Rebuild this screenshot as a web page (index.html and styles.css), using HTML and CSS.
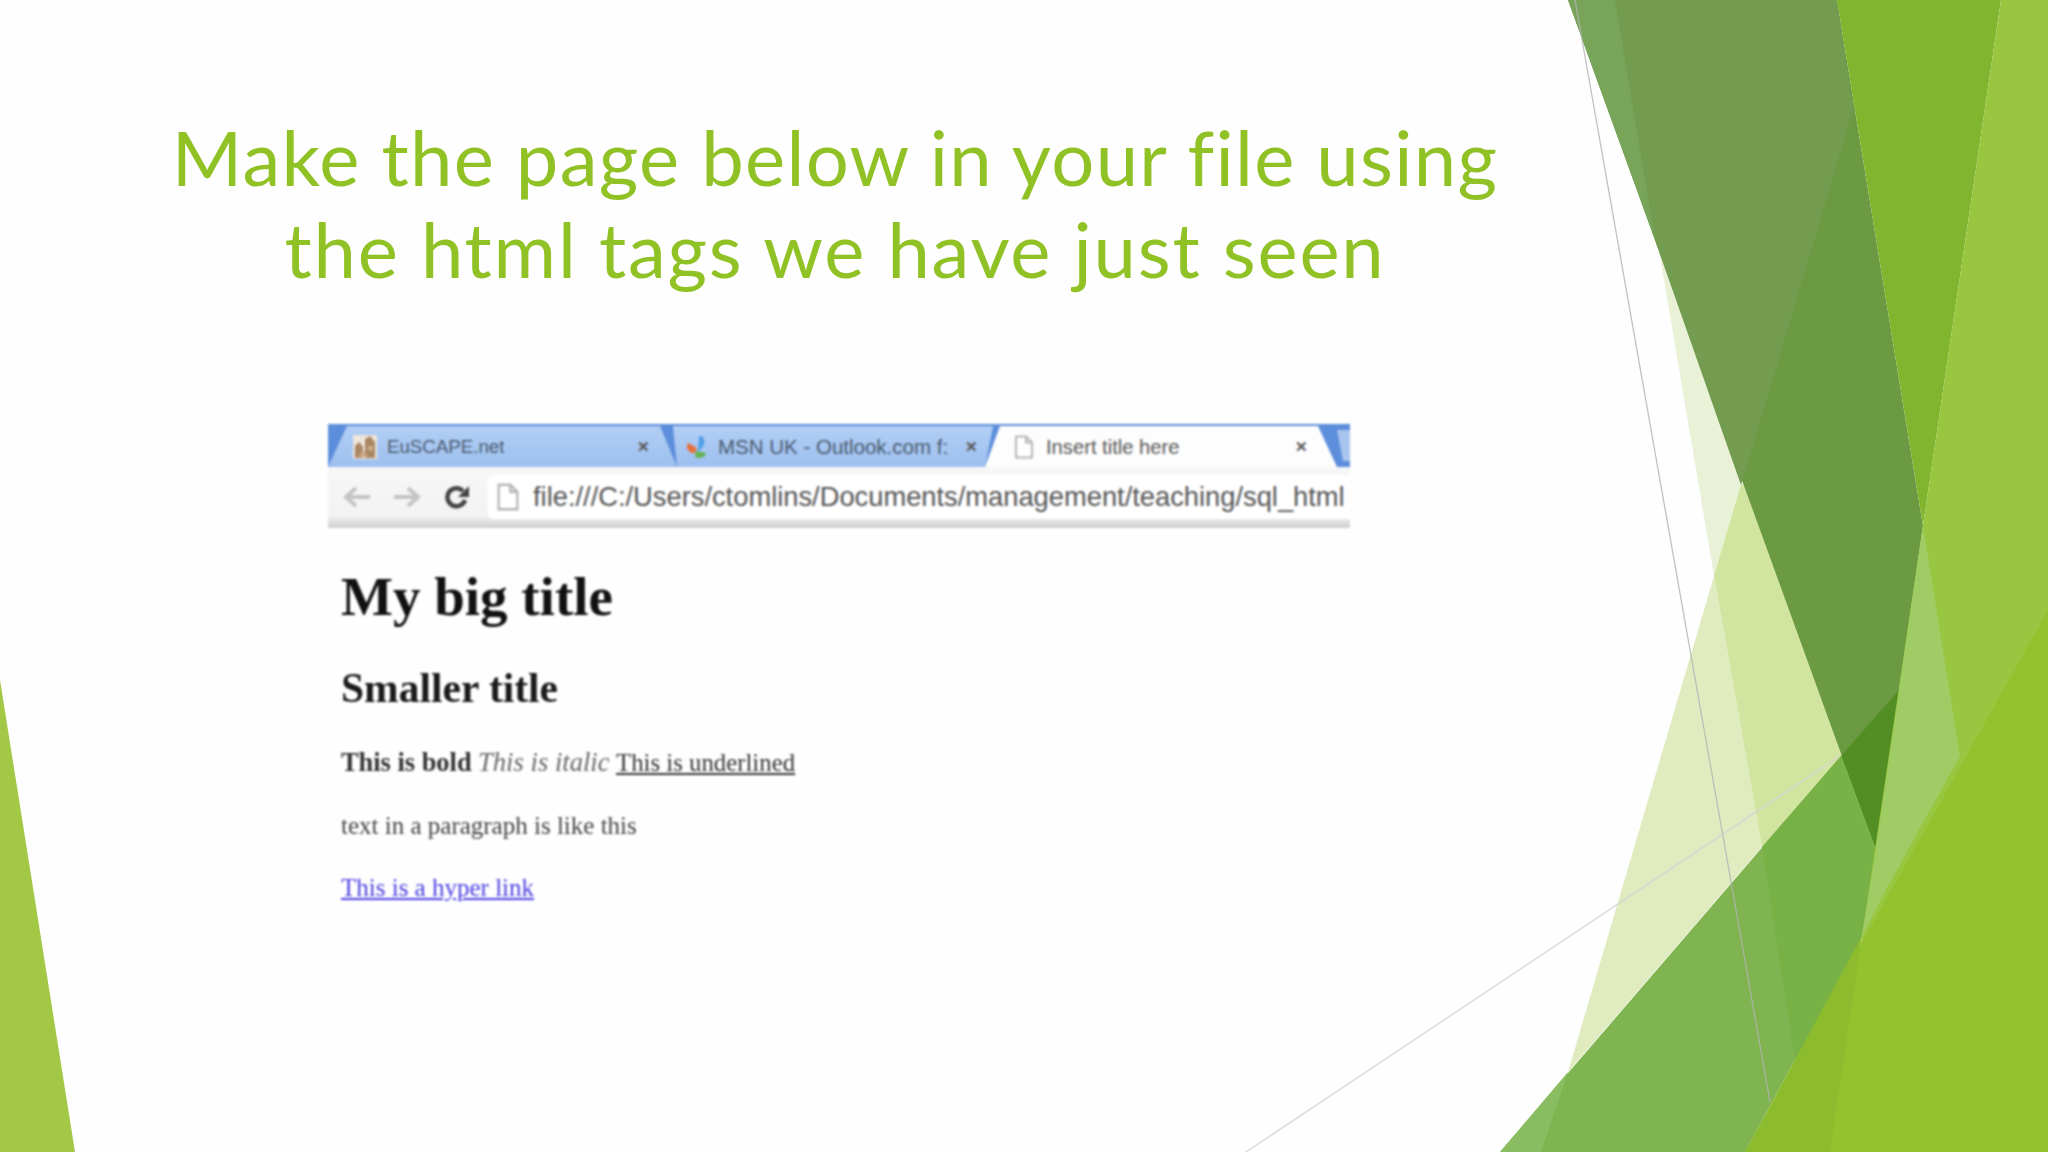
FILE: index.html
```html
<!DOCTYPE html>
<html lang="en">
<head>
  <meta charset="UTF-8">
  <title>Make the page below</title>
  <link rel="stylesheet" href="styles.css">
</head>
<body>
  <div class="slide">
    <!-- Facet theme shards behind the slide -->
    <svg class="shards" viewBox="0 0 2048 1152" aria-hidden="true">
      <polygon fill="#a3c845" points="0,680 75,1152 0,1152"/>
      <polygon fill="#e9f2d6" points="1659,250 1714,576 1760,485"/>
      <polygon fill="#e0ecc0" points="1714,576 1762,847 1568,1072"/>
      <polygon fill="#d2e5a0" points="1741,485 1714,576 1762,847 1860,756 1790,485"/>
      <polygon fill="#6b9a43" points="1568,0 1837,0 1923,526 1876,850"/>
      <polygon fill="#739c51" points="1615,0 1837,0 1853,110 1741,485 1655,240"/>
      <polygon fill="#78a55a" points="1568,0 1615,0 1655,240"/>
      <polygon fill="#82b52f" points="1837,0 2001,0 1923,526"/>
      <polygon fill="#528e23" points="1841,756 1899,690 1876,850"/>
      <polygon fill="#7fb451" points="1500,1152 1841,756 1876,850 1862,936 1745,1152"/>
      <polygon fill="#78b247" points="1762,847 1841,756 1876,850 1862,936 1800,1082 1795,1060"/>
      <polygon fill="#8abd62" points="1500,1152 1568,1072 1541,1152"/>
      <polygon fill="#98c640" points="2001,0 2048,0 2048,1152 1830,1152"/>
      <polygon fill="#a0cc66" points="1923,526 1960,756 1887,888 1862,936 1876,850"/>
      <polygon fill="#93c22f" points="1745,1152 2048,610 2048,1152"/>
      <polygon fill="#8cbb2d" points="1745,1152 1830,1152 1862,936"/>
      <line class="hair" x1="1575" y1="0" x2="1770" y2="1102"/>
      <line class="hair pale" x1="1246" y1="1152" x2="1840" y2="756"/>
    </svg>

    <h1 class="slide-title">Make the page below in your file using<br><span class="title-second">the html tags we have just seen</span></h1>

    <div class="shot">
      <div class="tabs">
        <div class="tab tab-first">
          <svg class="favicon" viewBox="0 0 24 24">
            <rect width="24" height="24" fill="#efe6da"/>
            <path d="M2 23V11l4-4 4 5v11zM12 23V4l5-3 5 6v16z" fill="#a98664"/>
            <path d="M5 22l5-7 5 7zM15 11h5v5h-5z" fill="#cbaa88"/>
          </svg>
          <span class="tab-label">EuSCAPE.net</span>
          <span class="tab-close">✕</span>
        </div>
        <div class="tab tab-second">
          <svg class="favicon" viewBox="0 0 24 24">
            <path d="M13 1c6 0 7 6 3 12l-4 4z" fill="#4f9fe6"/>
            <path d="M11 13L2 8c-3 5 1 11 7 10z" fill="#e8703a"/>
            <path d="M10 16l10 2c-1 5-6 6-11 4z" fill="#63b354"/>
          </svg>
          <span class="tab-label">MSN UK - Outlook.com f:</span>
          <span class="tab-close">✕</span>
        </div>
        <div class="tab tab-active">
          <svg class="favicon" viewBox="0 0 24 24">
            <path d="M4 1.5h10l6 6v15H4zM14 1.5v6h6" fill="#fff" stroke="#b5b5b5" stroke-width="2"/>
          </svg>
          <span class="tab-label">Insert title here</span>
          <span class="tab-close">✕</span>
        </div>
        <div class="new-tab"></div>
      </div>

      <div class="toolbar">
        <svg class="nav-icon" viewBox="0 0 28 24">
          <path d="M13 3L3 12l10 9M3 12h24" fill="none" stroke="#c4c4c4" stroke-width="4"/>
        </svg>
        <svg class="nav-icon" viewBox="0 0 28 24">
          <path d="M15 3l10 9-10 9M25 12H1" fill="none" stroke="#c4c4c4" stroke-width="4"/>
        </svg>
        <svg class="nav-icon" viewBox="0 0 28 24">
          <path d="M22 15a9 9 0 1 1-2-9" fill="none" stroke="#444" stroke-width="4.5"/>
          <path d="M26 1v11H15z" fill="#444"/>
        </svg>
        <div class="omnibox">
          <svg class="favicon" viewBox="0 0 24 24">
            <path d="M4 1.5h10l6 6v15H4zM14 1.5v6h6" fill="#fff" stroke="#b5b5b5" stroke-width="2"/>
          </svg>
          <span class="url">file:///C:/Users/ctomlins/Documents/management/teaching/sql_html</span>
        </div>
      </div>

      <div class="page">
        <h2 class="big">My big title</h2>
        <h3 class="small">Smaller title</h3>
        <p class="styled"><b>This is bold</b> <i>This is italic</i> <u>This is underlined</u></p>
        <p class="plain">text in a paragraph is like this</p>
        <p><a href="#">This is a hyper link</a></p>
      </div>
    </div>
  </div>
</body>
</html>
```

FILE: styles.css
```css
/* Reset and slide */
body, html {
  margin: 0;
  padding: 0;
  background-color: #fefefe;
}

.slide {
  position: relative;
  width: 2048px;
  height: 1152px;
  overflow: hidden;
  padding-top: 111px;
  box-sizing: border-box;
}

.shards {
  position: absolute;
  top: 0;
  left: 0;
  width: 2048px;
  height: 1152px;
}

.hair {
  stroke: #b4b4b4;
  stroke-width: 1.3;
  opacity: 0.8;
}

.hair.pale {
  stroke: #d4d4d4;
  stroke-width: 1.5;
}

/* Title */
.slide-title {
  position: relative;
  margin: 0;
  width: 1670px;
  text-align: center;
  font-family: Lato, "Noto Sans", sans-serif;
  font-size: 76px;
  font-weight: 400;
  line-height: 92px;
  letter-spacing: 1.3px;
  color: #90c226;
}

.title-second {
  letter-spacing: 1.8px;
}

/* Pasted browser screenshot, soft like the original */
.shot {
  position: relative;
  width: 1022px;
  margin: 129px 0 0 328px;
  font-family: "Liberation Sans", Arial, sans-serif;
  filter: blur(0.9px);
  overflow: hidden;
}

.tabs {
  display: flex;
  height: 43px;
  background: #5d8edb;
}

.tab {
  display: flex;
  align-items: center;
  box-sizing: border-box;
  height: 43px;
  padding-top: 3px;
  background: linear-gradient(#b3cff5, #9dc0ef);
  font-size: 18.7px;
  color: #4a5a70;
}

.tab-first {
  width: 349px;
  padding-left: 25px;
  padding-right: 27px;
  clip-path: polygon(19px 2px, 332px 2px, 349px 100%, 0 100%);
}

.tab-second {
  width: 320px;
  margin-left: -4px;
  padding-left: 13px;
  padding-right: 15px;
  font-size: 20.5px;
  clip-path: polygon(0 2px, 320px 2px, 312px 100%, 4px 100%);
}

.tab-second .favicon {
  margin-right: 8px;
}

.tab-active {
  width: 352px;
  margin-left: -8px;
  padding-left: 27px;
  padding-right: 29px;
  background: #fdfdfd;
  font-size: 20.2px;
  color: #555;
  clip-path: polygon(15px 2px, 333px 2px, 352px 100%, 0 100%);
}

.new-tab {
  flex: 1;
  margin: 6px 0;
  background: #a9c5ef;
  clip-path: polygon(0 0, 100% 0, 100% 100%, 6px 100%);
}

.favicon {
  flex-shrink: 0;
  width: 24px;
  height: 26px;
  margin-right: 10px;
}

.tab-label {
  overflow: hidden;
  white-space: nowrap;
}

.tab-second .tab-label {
  width: 232px;
}

.tab-close {
  margin-left: auto;
  font-size: 15px;
  font-weight: 700;
  color: #555;
}

.toolbar {
  display: flex;
  align-items: center;
  gap: 22px;
  height: 61px;
  box-sizing: border-box;
  padding: 0 0 2px 15px;
  background: linear-gradient(#f7f7f7 0, #f3f3f3 80%, #cfcfcf 100%);
}

.nav-icon {
  flex-shrink: 0;
  width: 28px;
  height: 24px;
}

.omnibox {
  display: flex;
  align-items: center;
  flex: 1;
  height: 44px;
  margin-left: -5px;
  padding-left: 6px;
  background: #fff;
  border-radius: 5px 0 0 5px;
  overflow: hidden;
}

.omnibox .favicon {
  width: 28px;
  height: 28px;
  margin-right: 11px;
}

.url {
  white-space: nowrap;
  font-size: 27.3px;
  color: #555;
}

/* The page shown inside the browser */
.page {
  padding: 0 0 30px 13px;
  font-family: "Liberation Serif", "Times New Roman", serif;
  font-size: 25px;
  color: #333;
}

.big {
  margin: 40px 0 0;
  font-size: 55px;
  line-height: 58px;
  color: #111;
}

.small {
  margin: 41px 0 0;
  font-size: 41.5px;
  line-height: 42px;
  color: #1a1a1a;
}

.page p {
  margin: 33px 0 0;
  line-height: 29px;
}

.page .styled {
  margin-top: 39px;
  font-size: 25.8px;
}

.page b {
  font-size: 26.4px;
}

.page i {
  font-size: 26.6px;
  color: #666;
}

.page u {
  font-size: 24.8px;
}

.page .plain {
  margin-top: 34px;
  color: #444;
}

.page a {
  color: #4a3ee0;
}
```
